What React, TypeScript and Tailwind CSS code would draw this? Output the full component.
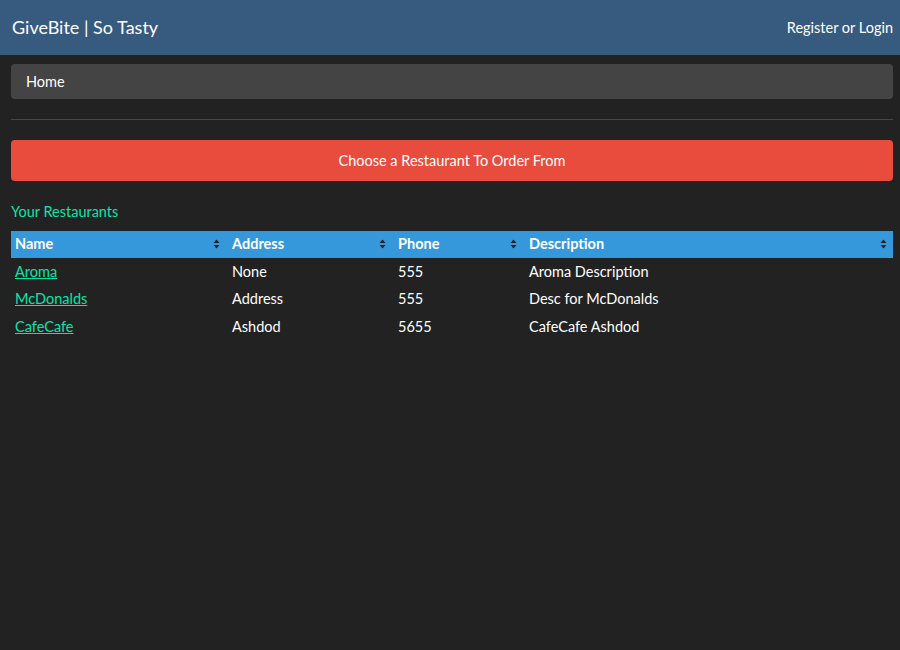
import React from "react";

interface IRestaurant {
  name: string;
  address: string;
  phone: string;
  description: string;
}

const restaurants: IRestaurant[] = [
  { name: "Aroma", address: "None", phone: "555", description: "Aroma Description" },
  { name: "McDonalds", address: "Address", phone: "555", description: "Desc for McDonalds" },
  { name: "CafeCafe", address: "Ashdod", phone: "5655", description: "CafeCafe Ashdod" },
];

const SortIcon: React.FC = () => (
  <svg width="7" height="10" viewBox="0 0 7 10" className="shrink-0">
    <path d="M0.5 4 L3.5 0.5 L6.5 4 Z" fill="#222222" />
    <path d="M0.5 6 L3.5 9.5 L6.5 6 Z" fill="#222222" />
  </svg>
);

const columns = [
  { label: "Name", w: "w-[215px]" },
  { label: "Address", w: "w-[166px]" },
  { label: "Phone", w: "w-[131px]" },
  { label: "Description", w: "flex-1" },
];

const App: React.FC = () => {
  return (
    <div className="min-h-[650px] bg-[#222222] text-white font-['Lato',sans-serif] text-[14.5px]">
      <nav className="h-[55px] bg-[#375a7f] flex items-center justify-between pl-3 pr-[7px]">
        <span className="text-[18px]">GiveBite | So Tasty</span>
        <span className="text-[14.5px]">Register or Login</span>
      </nav>

      <div className="pl-[11px] pr-[7px]">
        <div className="mt-[9px] h-[35px] bg-[#444444] rounded flex items-center pl-[15px]">
          Home
        </div>

        <hr className="mt-5 mb-5 border-t border-[#464646]" />

        <button className="w-full h-[41px] bg-[#e74c3c] rounded text-white text-[14.5px]">
          Choose a Restaurant To Order From
        </button>

        <h4 className="mt-[20px] text-[#0ce3ac] text-[14.5px]">Your Restaurants</h4>

        <div className="mt-[8px]">
          <div className="flex h-[27px] bg-[#3498db] font-bold">
            {columns.map((c, i) => (
              <div key={c.label} className={`${c.w} flex items-center justify-between ${i === 0 ? "pl-1" : "pl-[6px]"} pr-[6px]`}>
                <span>{c.label}</span>
                <SortIcon />
              </div>
            ))}
          </div>
          {restaurants.map((r) => (
            <div key={r.name} className="flex h-[27.5px] items-center">
              <div className="w-[215px] pl-1">
                <a href="#" className="text-[#0ce3ac] underline">{r.name}</a>
              </div>
              <div className="w-[166px] pl-[6px]">{r.address}</div>
              <div className="w-[131px] pl-[6px]">{r.phone}</div>
              <div className="flex-1 pl-[6px]">{r.description}</div>
            </div>
          ))}
        </div>
      </div>
    </div>
  );
};

export default App;
